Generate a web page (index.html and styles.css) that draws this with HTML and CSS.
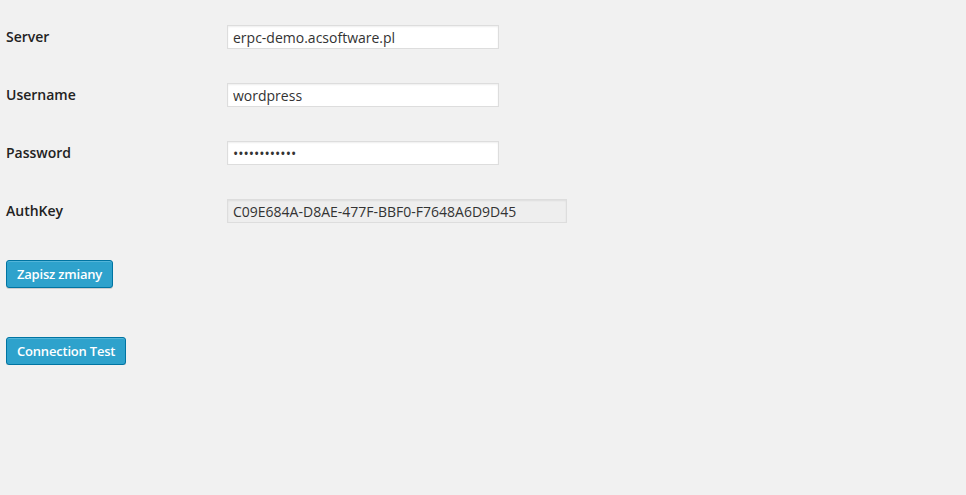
FILE: index.html
```html
<!DOCTYPE html>
<html>
<head>
<meta charset="utf-8">
<link rel="stylesheet" href="styles.css">
</head>
<body>
<form class="settings">
  <div class="row">
    <label class="label">Server</label>
    <input class="field" type="text" value="erpc-demo.acsoftware.pl">
  </div>
  <div class="row">
    <label class="label">Username</label>
    <input class="field" type="text" value="wordpress">
  </div>
  <div class="row">
    <label class="label">Password</label>
    <input class="field" type="password" value="wordpress123">
  </div>
  <div class="row">
    <label class="label">AuthKey</label>
    <input class="field field-wide" type="text" value="C09E684A-D8AE-477F-BBF0-F7648A6D9D45" readonly>
  </div>
  <div class="actions">
    <button type="button" class="button">Zapisz zmiany</button>
    <button type="button" class="button">Connection Test</button>
  </div>
</form>
</body>
</html>
```
FILE: styles.css
```css
html, body {
  margin: 0;
  padding: 0;
  background: #f1f1f1;
  font-family: "Open Sans", "Liberation Sans", sans-serif;
  color: #222;
}
.settings {
  padding: 8px 0 0 6px;
  display: flex;
  flex-direction: column;
}
.row {
  display: grid;
  grid-template-columns: 221px auto;
  align-items: center;
  height: 58px;
}
.label {
  font-size: 14px;
  font-weight: 600;
  color: #222;
  line-height: 1.3;
}
.field {
  box-sizing: border-box;
  width: 272px;
  height: 24px;
  margin: 0;
  padding: 0 5px;
  border: 1px solid #ddd;
  background: #fff;
  box-shadow: inset 0 1px 2px rgba(0,0,0,.07);
  font-family: "Open Sans", "Liberation Sans", sans-serif;
  font-size: 14px;
  color: #333;
  outline: none;
}
.field-wide {
  width: 340px;
  background: #eee;
}
.actions {
  display: flex;
  flex-direction: column;
  align-items: flex-start;
  gap: 49px;
  padding-top: 20px;
}
.button {
  box-sizing: border-box;
  height: 28px;
  margin: 0;
  padding: 0 10px 1px;
  border: 1px solid #0074a2;
  border-radius: 3px;
  background: #2ea2cc;
  color: #fff;
  font-family: "Open Sans", "Liberation Sans", sans-serif;
  font-size: 13px;
  font-weight: 600;
  letter-spacing: -0.2px;
  line-height: 26px;
  box-shadow: inset 0 1px 0 rgba(120,200,230,.5), 0 1px 0 rgba(0,0,0,.15);
  cursor: pointer;
}
```
